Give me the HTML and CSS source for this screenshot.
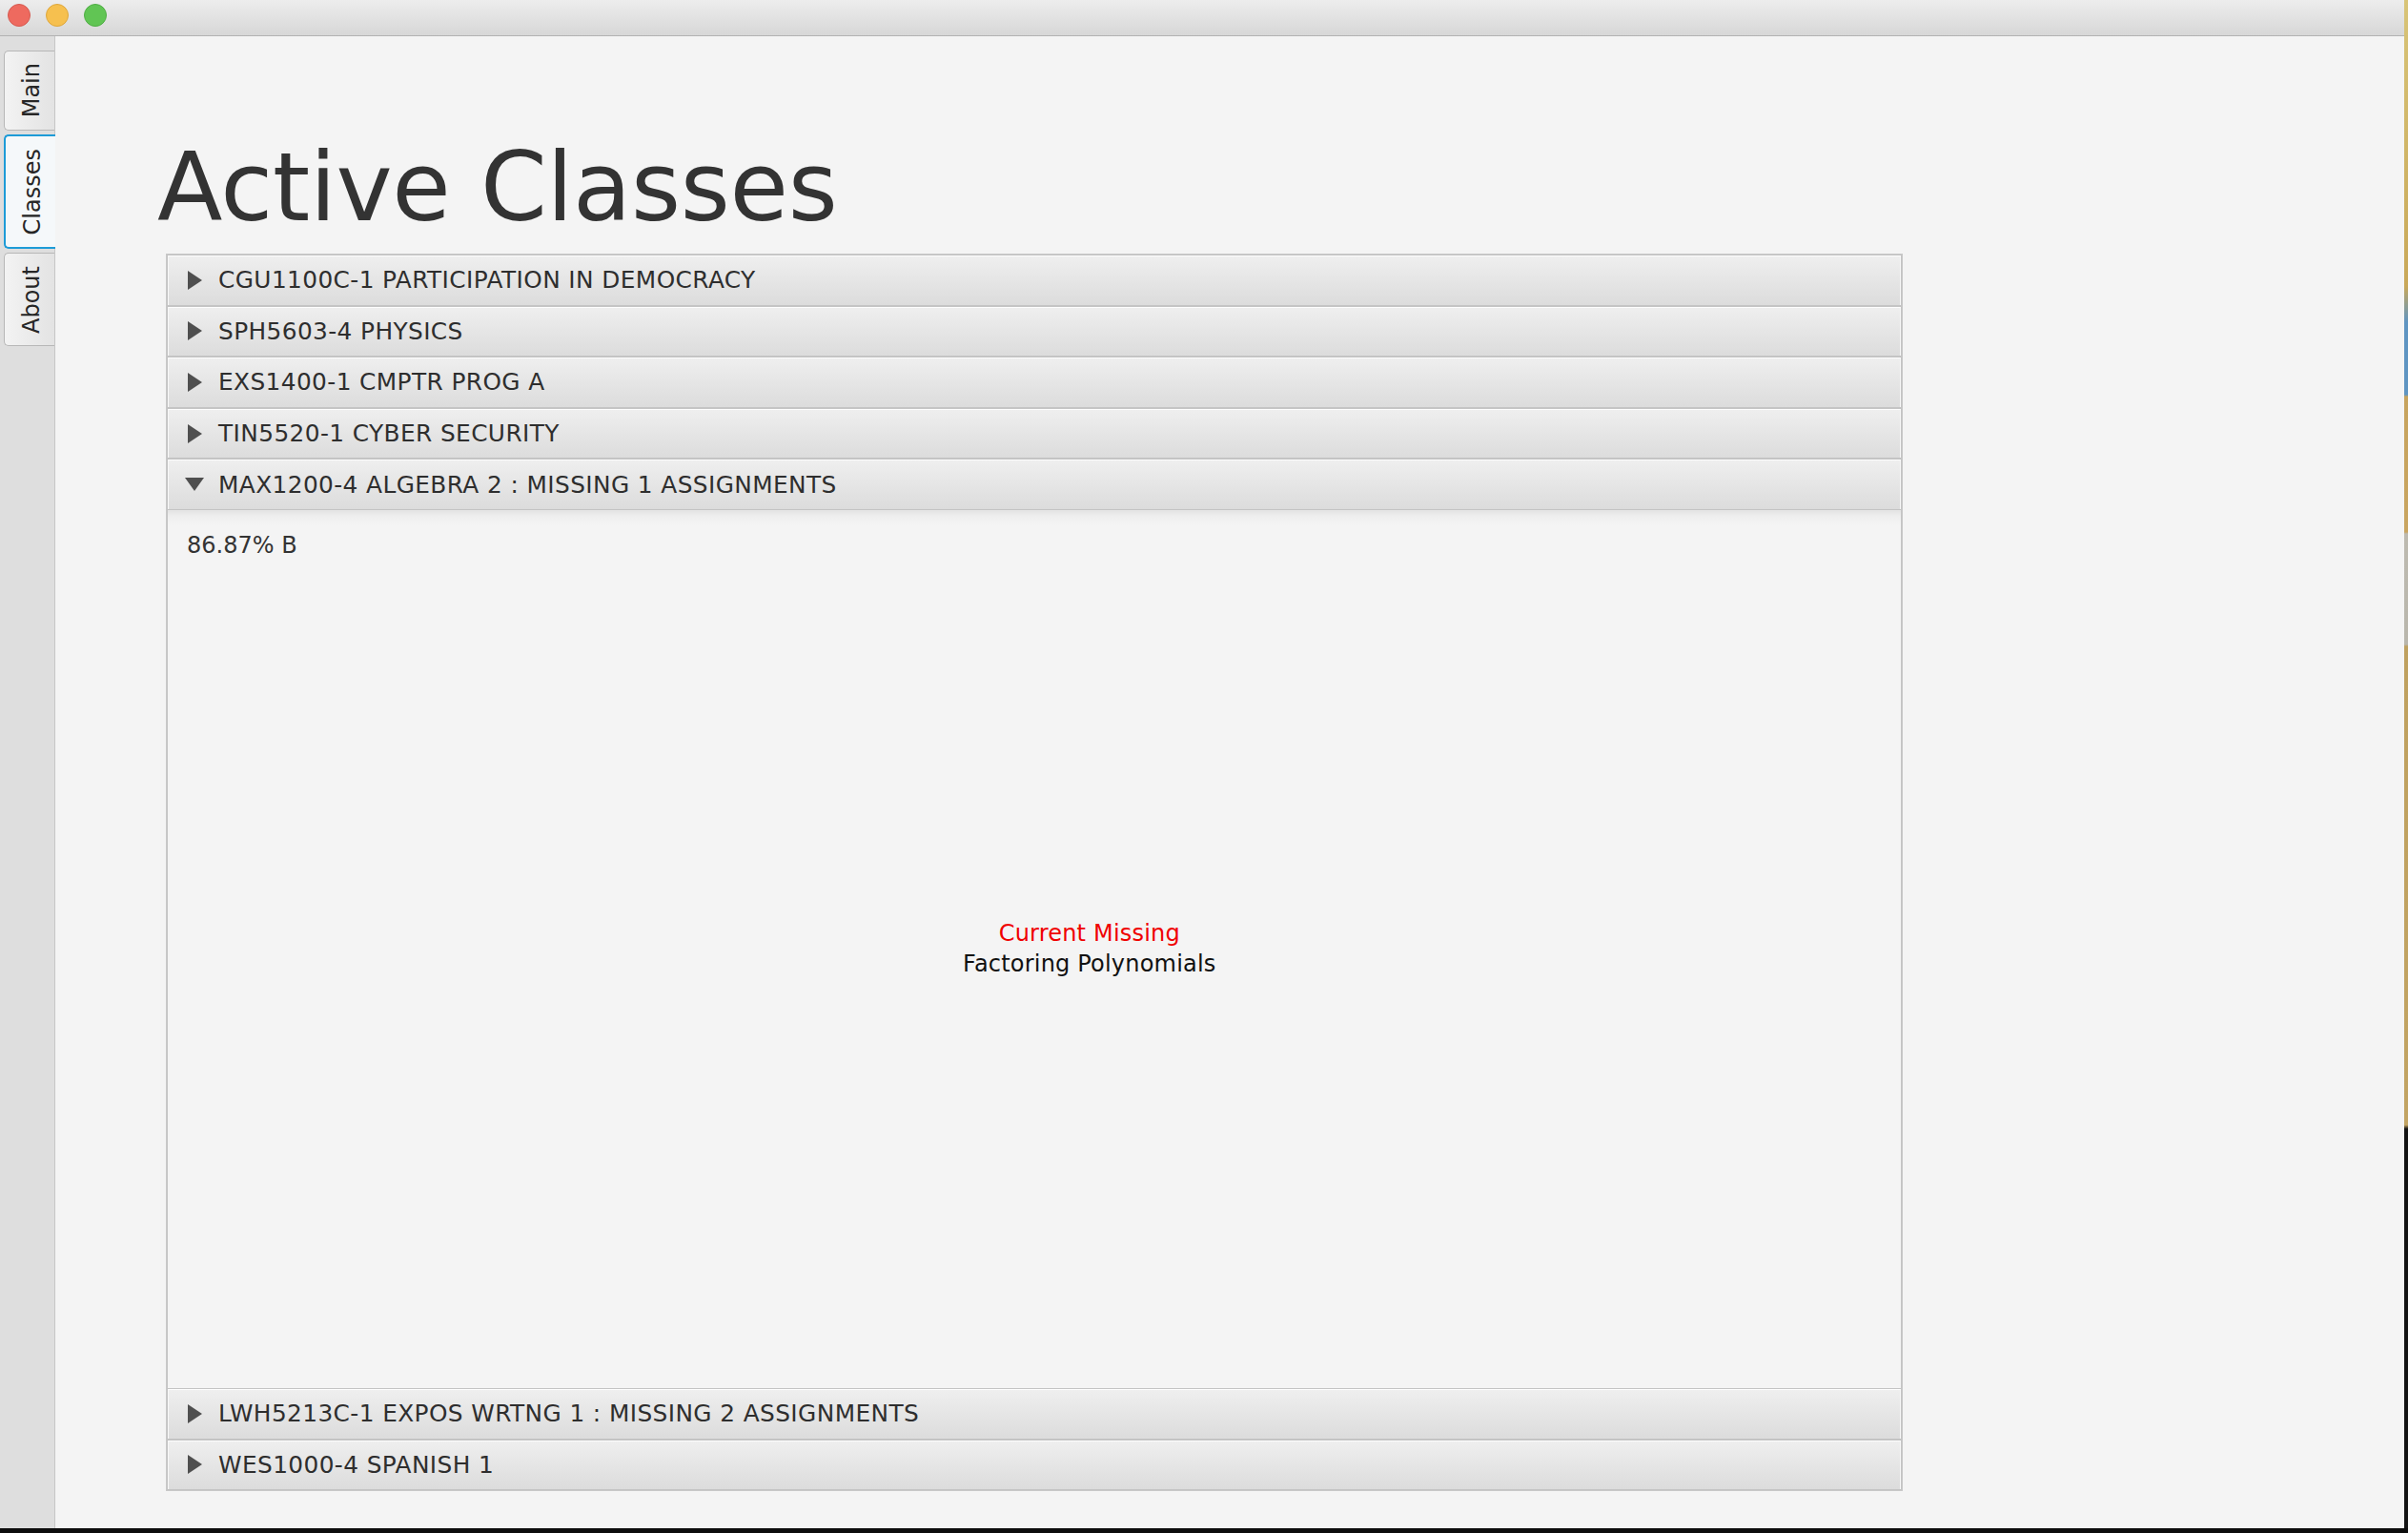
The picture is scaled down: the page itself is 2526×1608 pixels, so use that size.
FILE: index.html
```html
<!DOCTYPE html>
<html lang="en">
<head>
<meta charset="utf-8">
<title>Active Classes</title>
<link rel="stylesheet" href="styles.css">
</head>
<body>
<div class="screen">
  <div class="window">
    <div class="titlebar">
      <span class="light red"></span>
      <span class="light yellow"></span>
      <span class="light green"></span>
    </div>
    <div class="body">
      <nav class="tabstrip">
        <div class="tab tab-main"><span class="tab-label">Main</span></div>
        <div class="tab tab-classes selected"><span class="tab-label">Classes</span></div>
        <div class="tab tab-about"><span class="tab-label">About</span></div>
      </nav>
      <main class="main">
        <h1 class="title">Active Classes</h1>
        <div class="accordion">
          <div class="pane-header"><span class="arrow right"></span><span class="pane-title">CGU1100C-1 PARTICIPATION IN DEMOCRACY</span></div>
          <div class="pane-header"><span class="arrow right"></span><span class="pane-title">SPH5603-4 PHYSICS</span></div>
          <div class="pane-header"><span class="arrow right"></span><span class="pane-title">EXS1400-1 CMPTR PROG A</span></div>
          <div class="pane-header"><span class="arrow right"></span><span class="pane-title">TIN5520-1 CYBER SECURITY</span></div>
          <div class="pane-header"><span class="arrow down"></span><span class="pane-title">MAX1200-4 ALGEBRA 2 : MISSING 1 ASSIGNMENTS</span></div>
          <div class="pane-content">
            <div class="grade">86.87% B</div>
            <div class="missing">
              <div class="missing-label">Current Missing</div>
              <div class="missing-item">Factoring Polynomials</div>
            </div>
          </div>
          <div class="pane-header"><span class="arrow right"></span><span class="pane-title">LWH5213C-1 EXPOS WRTNG 1 : MISSING 2 ASSIGNMENTS</span></div>
          <div class="pane-header"><span class="arrow right"></span><span class="pane-title">WES1000-4 SPANISH 1</span></div>
        </div>
      </main>
    </div>
  </div>
  <div class="desktop-edge"></div>
  <div class="desktop-bottom"></div>
</div>
</body>
</html>
```

FILE: styles.css
```css
* {
  box-sizing: border-box;
}

html, body {
  margin: 0;
  padding: 0;
  background: #0d0d0d;
}

body {
  font-family: "DejaVu Sans", "Liberation Sans", sans-serif;
  color: #333333;
}

.screen {
  width: 2526px;
  height: 1608px;
  display: grid;
  grid-template-columns: 2522px 4px;
  grid-template-rows: 1603px 5px;
  overflow: hidden;
}

.window {
  display: flex;
  flex-direction: column;
  background: #f4f4f4;
  overflow: hidden;
}

.desktop-edge {
  background: linear-gradient(to bottom,
    #d8c478 0px, #c9a858 300px,
    #5f95c2 338px, #5f95c2 414px,
    #c7a45e 416px, #c9a560 558px,
    #bdbab0 560px, #b9b6ac 676px,
    #bfa15f 678px, #c2a463 1180px,
    #141414 1184px, #141414 1603px);
}

.desktop-bottom {
  grid-column: 1 / 3;
  background: #0d0d0d;
}

/* Title bar */
.titlebar {
  height: 38px;
  flex: none;
  display: flex;
  align-items: flex-start;
  gap: 16px;
  padding: 4px 0 0 8px;
  background: linear-gradient(to bottom, #ededed, #d7d7d7);
  border-bottom: 1px solid #b2b2b2;
}

.light {
  width: 24px;
  height: 24px;
  border-radius: 50%;
}

.light.red {
  background: #ee6a5f;
  border: 1px solid #d65a50;
}

.light.yellow {
  background: #f6c04f;
  border: 1px solid #dea73c;
}

.light.green {
  background: #61c554;
  border: 1px solid #4fae44;
}

/* Body */
.body {
  flex: 1;
  display: flex;
  min-height: 0;
}

/* Vertical tabs */
.tabstrip {
  width: 58px;
  flex: none;
  background: #dedede;
  border-right: 1px solid #c6c6c6;
  display: flex;
  flex-direction: column;
  gap: 4px;
  padding: 15px 0 0 4px;
}

.tab {
  width: 53px;
  margin-right: -1px;
  border: 1px solid #b7b7b7;
  border-right: none;
  border-radius: 5px 0 0 5px;
  background: linear-gradient(to right, #f3f3f3, #e3e3e3);
  display: flex;
  align-items: center;
  justify-content: center;
  padding-left: 4px;
  position: relative;
}

.tab-main {
  height: 84px;
}

.tab-classes {
  height: 120px;
}

.tab-about {
  height: 98px;
}

.tab.selected {
  border: 2px solid #1d9bd7;
  border-right: none;
  background: #f5f8fa;
  width: 54px;
  z-index: 1;
}

.tab-label {
  writing-mode: vertical-rl;
  transform: rotate(180deg);
  font-size: 24px;
  line-height: 28px;
  color: #262626;
  white-space: nowrap;
}

/* Main */
.main {
  flex: 1;
  padding: 109px 0 0 107px;
}

.title {
  margin: 0;
  font-weight: normal;
  font-size: 100px;
  line-height: 100px;
  height: 100px;
  color: #333333;
  letter-spacing: -0.3px;
}

.accordion {
  margin: 19px 0 0 9px;
  width: 1822px;
  border: 1px solid #c8c8c8;
  display: flex;
  flex-direction: column;
}

.pane-header {
  height: 53.6px;
  flex: none;
  border: 1px solid #c4c4c4;
  background: linear-gradient(to bottom, #efefef, #dcdcdc);
  box-shadow: inset 0 1px 0 #fdfdfd, inset 1px 0 0 #f8f8f8, inset -1px 0 0 #f8f8f8;
  display: flex;
  align-items: center;
  padding-left: 18px;
}

.arrow {
  width: 20px;
  height: 20px;
  flex: none;
  display: flex;
  align-items: center;
  justify-content: center;
  margin-right: 15px;
}

.arrow.right::before {
  content: "";
  width: 0;
  height: 0;
  border-left: 15px solid #4f4f4f;
  border-top: 10px solid transparent;
  border-bottom: 10px solid transparent;
}

.arrow.down::before {
  content: "";
  width: 0;
  height: 0;
  border-top: 14px solid #4f4f4f;
  border-left: 10px solid transparent;
  border-right: 10px solid transparent;
}

.pane-title {
  font-size: 24.8px;
  letter-spacing: 0.4px;
  color: #2e2e2e;
  white-space: nowrap;
}

.pane-content {
  height: 921px;
  flex: none;
  border-left: 1px solid #c4c4c4;
  border-right: 1px solid #c4c4c4;
  background: linear-gradient(to bottom, #e2e2e2 0px, #eeeeee 6px, #f4f4f4 16px);
  padding: 23px 20px;
  display: flex;
}

.grade {
  font-size: 24px;
  color: #333333;
  white-space: nowrap;
  align-self: flex-start;
}

.missing {
  flex: 1;
  display: flex;
  flex-direction: column;
  align-items: center;
  justify-content: center;
  font-size: 24px;
  line-height: 32px;
  letter-spacing: 0.2px;
}

.missing-label {
  color: #f00000;
}

.missing-item {
  color: #111111;
}
```
